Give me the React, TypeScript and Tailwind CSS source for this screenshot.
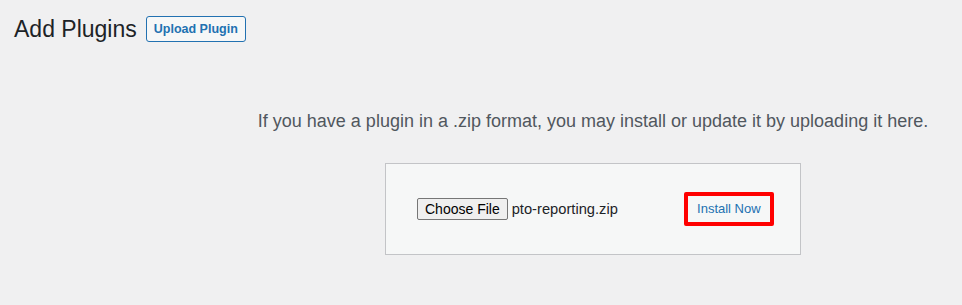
import React from 'react'

const App = () => {
    return (
        <div className="w-[962px] h-[305px] bg-[#f0f0f1] text-[#3c434a] font-['Segoe_UI','Liberation_Sans',sans-serif] overflow-hidden">
            <div className="flex items-center gap-[9px] pl-[14px] pt-[16px]">
                <h1 className="text-[23px] leading-[26px] text-[#1d2327] font-normal">Add Plugins</h1>
                <button className="h-[26px] px-[7px] border border-[#2271b1] rounded-[3px] bg-[#f6f7f7] text-[#2271b1] text-[12.5px] font-semibold leading-none">
                    Upload Plugin
                </button>
            </div>
            <div className="pl-[224px] flex flex-col items-center">
                <p className="mt-[66px] text-[18px] leading-[26px] text-[#50575e]">
                    If you have a plugin in a .zip format, you may install or update it by uploading it here.
                </p>
                <form className="mt-[29px] w-[416px] h-[92px] border border-[#c3c4c7] bg-[#f6f7f7] flex items-center pl-[31px]">
                    <div className="flex items-center">
                        <span className="h-[22px] px-[7px] border border-[#767676] rounded-[2px] bg-[#efefef] text-[14px] leading-[20px] text-black font-['Liberation_Sans',sans-serif]">
                            Choose File
                        </span>
                        <span className="ml-[4px] text-[14.7px] text-[#1d2327] font-['Liberation_Sans',sans-serif]">pto-reporting.zip</span>
                    </div>
                    <div className="ml-[66px] border-[4px] border-[#ff0000] rounded-[2px] w-[90px] h-[34px] flex items-center justify-center">
                        <span className="text-[13px] text-[#2271b1]">Install Now</span>
                    </div>
                </form>
            </div>
        </div>
    )
}

export default App
